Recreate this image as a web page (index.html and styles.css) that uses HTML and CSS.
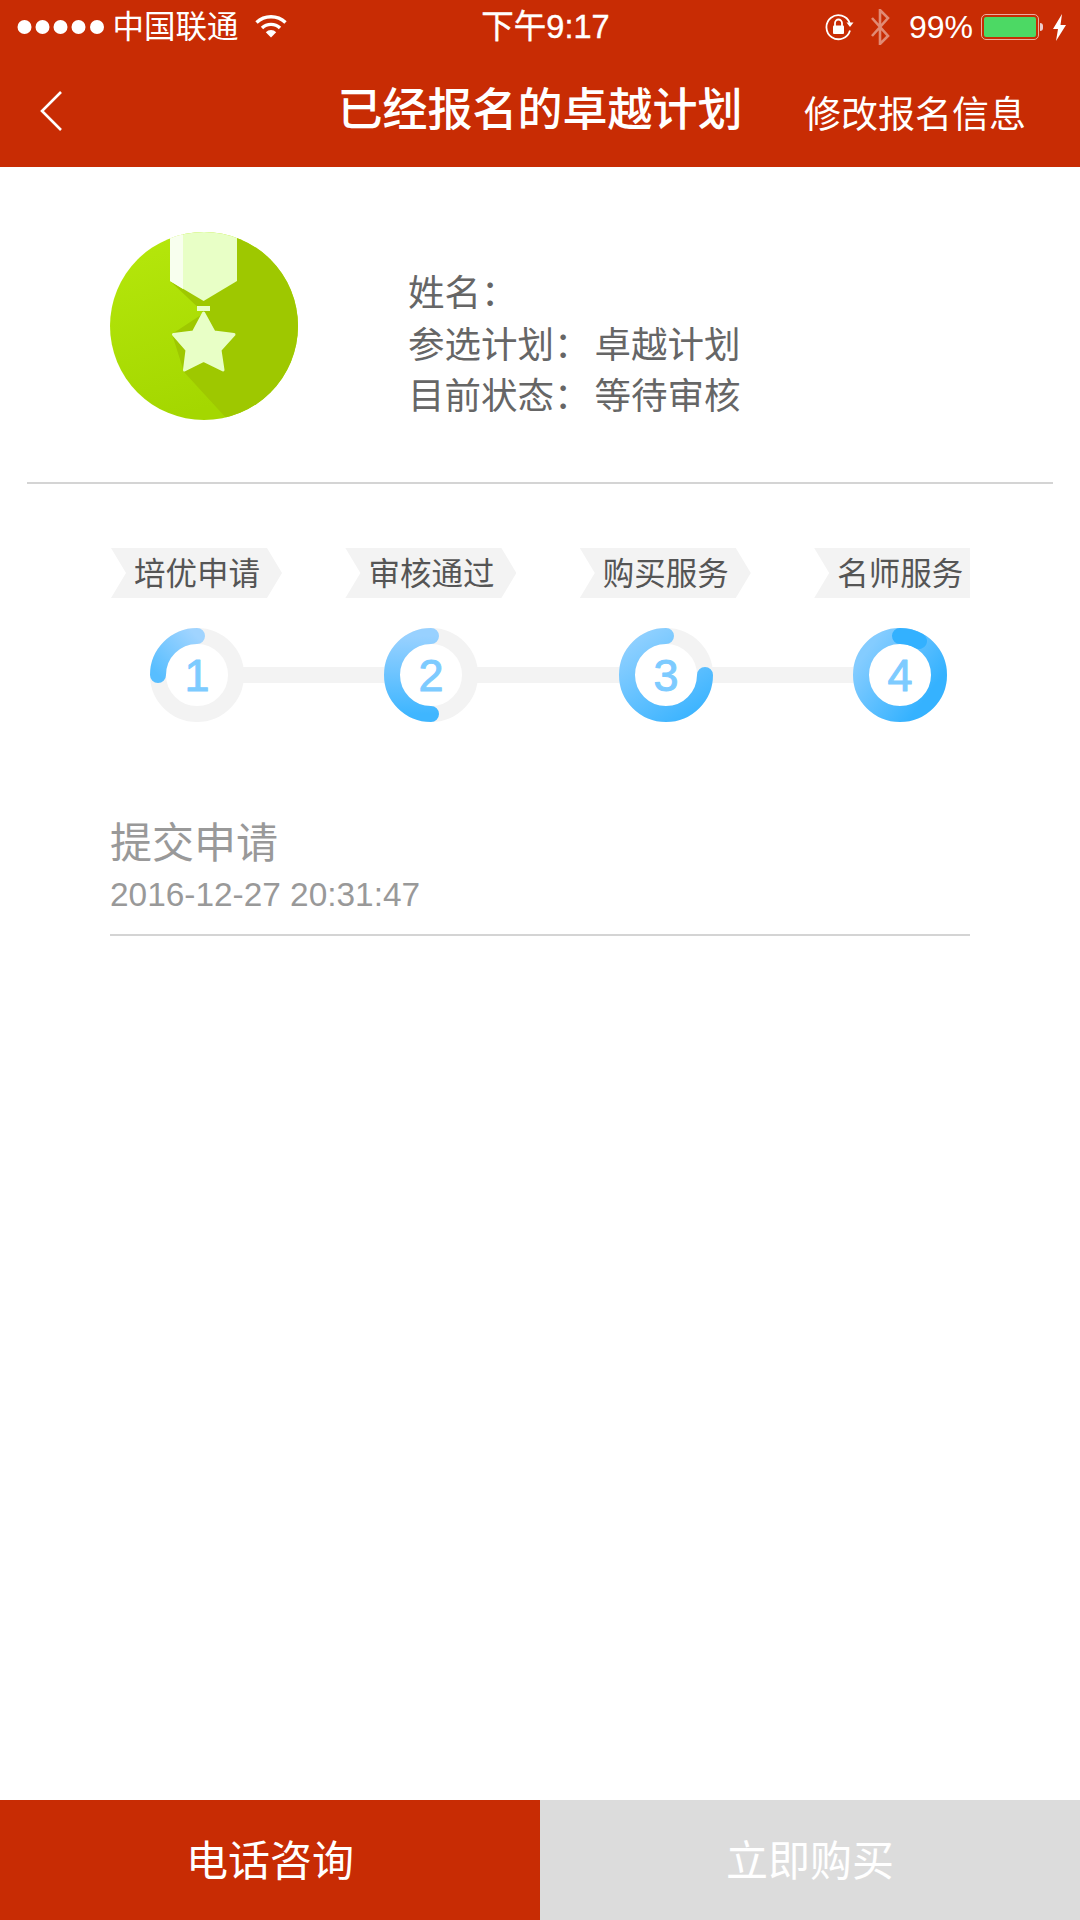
FILE: index.html
```html
<!DOCTYPE html>
<html lang="zh-CN">
<head>
<meta charset="utf-8">
<title>已经报名的卓越计划</title>
<link rel="stylesheet" href="styles.css">
</head>
<body>
<div class="page">
  <header class="top">
    <div class="status">
      <div class="status-left">
        <svg class="dots" width="90" height="16" viewBox="0 0 90 16"><circle cx="7.5" cy="8" r="7"/><circle cx="25.5" cy="8" r="7"/><circle cx="43.5" cy="8" r="7"/><circle cx="61.5" cy="8" r="7"/><circle cx="80" cy="8" r="7"/></svg>
        <span class="carrier">中国联通</span>
        <svg class="wifi" width="32" height="24" viewBox="0 0 32 24"><path d="M1.5 8.5a21 21 0 0 1 29 0" fill="none" stroke="#fff" stroke-width="3.4"/><path d="M7 14a13 13 0 0 1 18 0" fill="none" stroke="#fff" stroke-width="3.4"/><path d="M10.800 18.200a7.500 7.500 0 0 1 10.400 0L16 23.500z" fill="#fff"/></svg>
      </div>
      <div class="clock">下午9:17</div>
      <div class="status-right">
        <svg class="lock" width="30" height="28" viewBox="0 0 30 28"><path d="M26 17.500A12 12 0 1 1 25.700 10" fill="none" stroke="#fff" stroke-width="1.800"/><path d="M22.500 9.500h7l-3.500 4.500z" fill="#fff"/><rect x="9" y="12.500" width="11" height="8.500" rx="1" fill="#fff"/><path d="M11 13V10a3.500 3.500 0 0 1 7 0v3" fill="none" stroke="#fff" stroke-width="1.800"/></svg>
        <svg class="bt" width="20" height="36" viewBox="0 0 20 36"><path d="M2 9l16 18-8 8V1l8 8L2 27" fill="none" stroke="#fff" stroke-opacity=".45" stroke-width="2.600"/></svg>
        <span class="pct">99%</span>
        <div class="battery"><div class="battery-fill"></div></div>
        <div class="battery-nub"></div>
        <svg class="bolt" width="13" height="27" viewBox="0 0 13 27"><path d="M9 0L0 15h5L3 27l10-16H7.500z" fill="#fff"/></svg>
      </div>
    </div>
    <nav class="nav">
      <div class="nav-left">
        <svg class="back" width="24" height="42" viewBox="0 0 24 42"><path d="M22 2L3 21l19 19" fill="none" stroke="#fff" stroke-width="2.600"/></svg>
      </div>
      <h1 class="title">已经报名的卓越计划</h1>
      <div class="nav-action">修改报名信息</div>
    </nav>
  </header>

  <main class="content">
    <section class="profile">
      <svg class="medal" width="188" height="188" viewBox="0 0 188 188">
        <defs>
          <linearGradient id="medalBg" x1="0" y1="0" x2="0.300" y2="1"><stop offset="0" stop-color="#b6e80c"/><stop offset="1" stop-color="#a4d700"/></linearGradient>
          <clipPath id="medalClip"><circle cx="94" cy="94" r="94"/></clipPath>
        </defs>
        <circle cx="94" cy="94" r="94" fill="url(#medalBg)"/>
        <g clip-path="url(#medalClip)">
          <path d="M127 0H188V188H118L74 140 62 102 94 81 60 49H127z" fill="#9ec800"/>
          <path d="M60 0H127V49L93.600 69 60 49z" fill="#e8ffc6"/>
          <path d="M60 0H73V57L60 49z" fill="#f8ffee"/>
        </g>
        <rect x="87" y="74" width="13" height="5" fill="#e8ffc6"/>
        <path d="M93.600 81L104 100 124 102.500 110 118 113 138 93.600 128.500 74.500 138 77 118 63.500 102.500 83.500 100z" fill="#e8ffc6" stroke="#e8ffc6" stroke-width="3" stroke-linejoin="round"/>
      </svg>
      <div class="info">
        <div class="info-row">姓名：</div>
        <div class="info-row">参选计划：<span class="info-value">卓越计划</span></div>
        <div class="info-row">目前状态：<span class="info-value">等待审核</span></div>
      </div>
    </section>

    <hr class="divider">

    <section class="steps">
      <div class="step">
        <div class="tag">培优申请</div>
        <svg class="ring" width="94" height="94" viewBox="0 0 94 94">
          <defs><linearGradient id="g1" gradientUnits="userSpaceOnUse" x1="47" y1="8" x2="8" y2="47"><stop offset="0" stop-color="#a0d4ff"/><stop offset="1" stop-color="#58beff"/></linearGradient></defs>
          <circle class="ring-base" cx="47" cy="47" r="39"/>
          <path class="ring-arc" stroke="url(#g1)" d="M8 47A39 39 0 0 1 47 8"/>
          <text class="ring-num" x="47" y="63">1</text>
        </svg>
      </div>
      <div class="step">
        <div class="tag">审核通过</div>
        <svg class="ring" width="94" height="94" viewBox="0 0 94 94">
          <defs><linearGradient id="g2" gradientUnits="userSpaceOnUse" x1="47" y1="8" x2="47" y2="86"><stop offset="0" stop-color="#98d1ff"/><stop offset="1" stop-color="#3fb6ff"/></linearGradient></defs>
          <circle class="ring-base" cx="47" cy="47" r="39"/>
          <path class="ring-arc" stroke="url(#g2)" d="M47 8A39 39 0 0 0 47 86"/>
          <text class="ring-num" x="47" y="63">2</text>
        </svg>
      </div>
      <div class="step">
        <div class="tag">购买服务</div>
        <svg class="ring" width="94" height="94" viewBox="0 0 94 94">
          <defs><linearGradient id="g3" gradientUnits="userSpaceOnUse" x1="20" y1="8" x2="70" y2="86"><stop offset="0" stop-color="#8fd0ff"/><stop offset="1" stop-color="#3fb5ff"/></linearGradient></defs>
          <circle class="ring-base" cx="47" cy="47" r="39"/>
          <path class="ring-arc" stroke="url(#g3)" d="M47 8A39 39 0 1 0 86 47"/>
          <text class="ring-num" x="47" y="63">3</text>
        </svg>
      </div>
      <div class="step step-last">
        <div class="tag">名师服务</div>
        <svg class="ring" width="94" height="94" viewBox="0 0 94 94">
          <defs><linearGradient id="g4" gradientUnits="userSpaceOnUse" x1="20" y1="15" x2="80" y2="60"><stop offset="0" stop-color="#84ccff"/><stop offset="1" stop-color="#35b2ff"/></linearGradient></defs>
          <circle class="ring-base" cx="47" cy="47" r="39"/>
          <circle class="ring-full" stroke="url(#g4)" cx="47" cy="47" r="39"/>
          <path class="ring-arc ring-cap" d="M47 8A39 39 0 0 1 66 13"/>
          <text class="ring-num" x="47" y="63">4</text>
        </svg>
      </div>
    </section>

    <section class="record">
      <div class="record-title">提交申请</div>
      <div class="record-time">2016-12-27 20:31:47</div>
    </section>
  </main>

  <footer class="actions">
    <div class="action action-call">电话咨询</div>
    <div class="action action-buy">立即购买</div>
  </footer>
</div>
</body>
</html>
```

FILE: styles.css
```css
* { box-sizing: border-box; }
html, body { margin: 0; padding: 0; }
body {
  width: 1080px;
  height: 1920px;
  background: #fff;
  font-family: "Liberation Sans", "Noto Sans CJK SC", sans-serif;
  overflow: hidden;
}
.page { display: flex; flex-direction: column; height: 1920px; }

/* header */
.top { background: #c82c04; color: #fff; height: 167px; flex: none; }
.status {
  display: grid;
  grid-template-columns: 1fr auto 1fr;
  align-items: center;
  height: 54px;
  padding: 0 14px 0 17px;
}
.status-left { display: flex; align-items: center; }
.dots { fill: #fff; flex: none; }
.carrier { font-size: 31.500px; margin-left: 5.500px; line-height: 40px; }
.wifi { margin-left: 16px; margin-top: -3px; }
.clock { font-size: 32.500px; line-height: 40px; margin-left: 8px; -webkit-text-stroke: .4px #fff; }
.status-right { display: flex; align-items: center; justify-content: flex-end; }
.lock { flex: none; }
.bt { margin-left: 16px; flex: none; }
.pct { font-size: 32px; margin-left: 19px; line-height: 40px; }
.battery {
  width: 58px;
  height: 26px;
  margin-left: 8px;
  padding: 2px;
  border: 1.500px solid #ecaea0;
  border-radius: 5px;
}
.battery-fill { height: 100%; background: #4cd964; border-radius: 2px; }
.battery-nub { width: 3px; height: 8px; background: #ecc; border-radius: 0 3px 3px 0; margin-left: 1px; }
.bolt { margin-left: 10px; flex: none; }

.nav {
  display: grid;
  grid-template-columns: 1fr auto 1fr;
  align-items: center;
  height: 113px;
}
.nav-left { padding-left: 39px; display: flex; margin-top: 1px; }
.title { margin: 0; font-size: 45px; font-weight: 500; line-height: 110px; height: 110px; }
.nav-action { font-size: 37px; text-align: right; padding-right: 54px; margin-top: 2px; }

/* profile */
.content { flex: 1; min-height: 0; }
.profile { display: flex; align-items: flex-start; padding: 65px 0 0 110px; height: 253px; }
.medal { flex: none; }
.info { margin-left: 110px; padding-top: 36px; color: #666; font-size: 36.500px; line-height: 51px; }
.info-row { height: 51.500px; white-space: nowrap; }
.info-value { margin-left: 4px; }
.divider { height: 2px; margin: 62px 27px 0; border: 0; background: #d4d4d4; }

/* stepper */
.steps { position: relative; display: grid; grid-template-columns: repeat(4, 234.400px); margin: 64px 0 0 111px; width: 859px; }
.steps::before {
  content: "";
  position: absolute;
  left: 86px;
  top: 119px;
  width: 703px;
  height: 16px;
  background: #f3f3f3;
}
.step { position: relative; display: flex; flex-direction: column; align-items: flex-start; }
.tag {
  width: 171px;
  height: 50px;
  padding-left: 23px;
  background: #f3f3f3;
  color: #555;
  font-size: 31.500px;
  line-height: 52px;
  white-space: nowrap;
  clip-path: polygon(0 0, 156px 0, 100% 50%, 156px 100%, 0 100%, 15px 50%);
}
.step-last .tag { width: 156px; clip-path: polygon(0 0, 100% 0, 100% 100%, 0 100%, 15px 50%); }
.ring { margin: 30px 0 0 39px; display: block; }
.ring-base { fill: #fff; stroke: #f3f3f3; stroke-width: 16; }
.ring-arc { fill: none; stroke-width: 16; stroke-linecap: round; }
.ring-full { fill: none; stroke-width: 16; }
.ring-cap { stroke: #33b1ff; }
.ring-num {
  fill: #7dcbff;
  stroke: #7dcbff;
  stroke-width: 1px;
  stroke-linejoin: round;
  font-family: "Liberation Sans", sans-serif;
  font-size: 45px;
  text-anchor: middle;
}

/* record */
.record { margin: 93px 110px 0; height: 121px; border-bottom: 2px solid #d4d4d4; }
.record-title { color: #999; font-size: 42px; line-height: 58px; }
.record-time { color: #999; font-size: 33.400px; line-height: 40px; margin-top: 2px; }

/* footer */
.actions { display: grid; grid-template-columns: 1fr 1fr; height: 120px; flex: none; }
.action { color: #fff; font-size: 42px; line-height: 124px; text-align: center; }
.action-call { background: #c82c04; }
.action-buy { background: #dcdcdc; }
```
